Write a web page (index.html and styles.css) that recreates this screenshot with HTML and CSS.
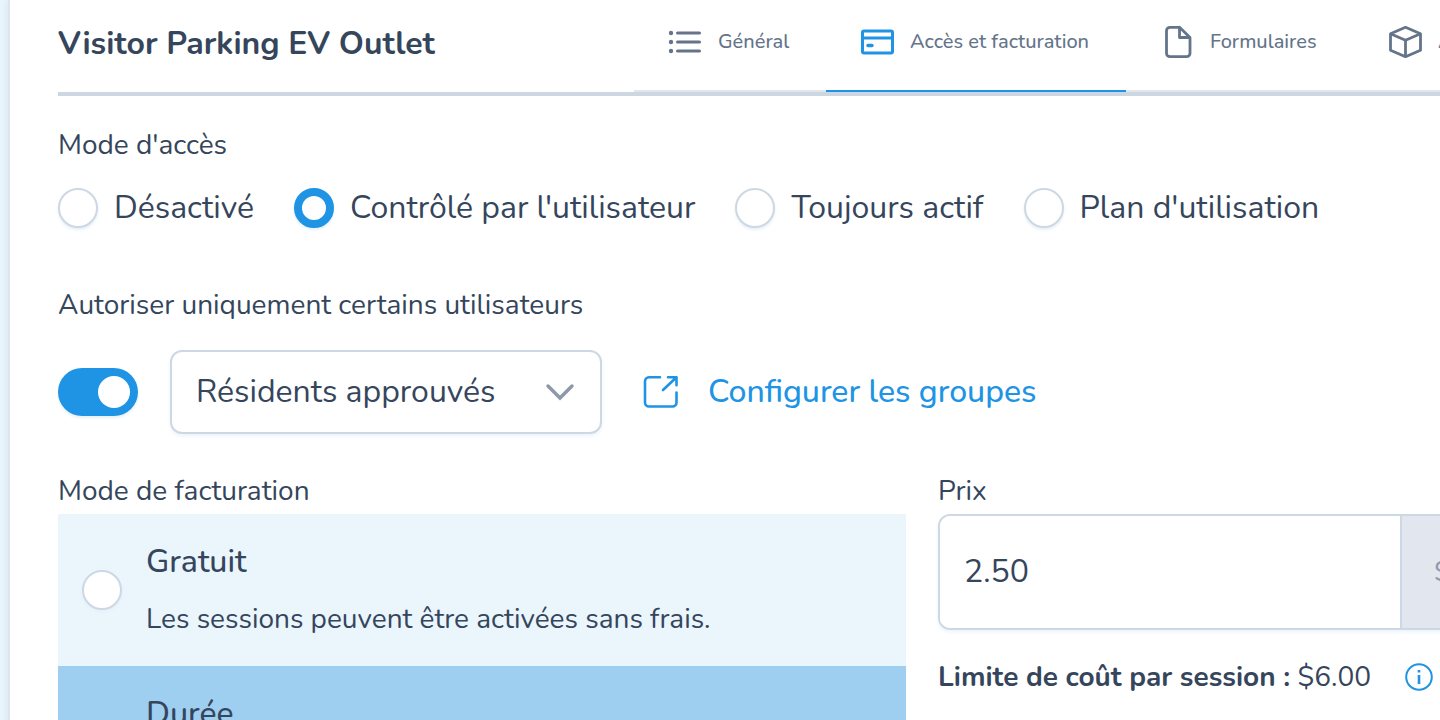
FILE: index.html
```html
<!DOCTYPE html>
<html lang="fr">
<head>
<meta charset="utf-8">
<title>Visitor Parking EV Outlet</title>
<link rel="stylesheet" href="styles.css">
</head>
<body>
<main class="card">
  <div class="content">
    <header class="header">
      <h1 class="title">Visitor Parking EV Outlet</h1>
      <nav class="tabs">
        <button class="tab tab-general" type="button">
          <svg class="tab-icon" viewBox="0 0 32 32" aria-hidden="true"><g stroke-linecap="round" stroke-width="3"><path d="M7.500 7h22M7.500 16h22M7.500 25h22"/></g><g class="dots"><circle cx="1" cy="7" r="2.200"/><circle cx="1" cy="16" r="2.200"/><circle cx="1" cy="25" r="2.200"/></g></svg>
          <span>Général</span>
        </button>
        <button class="tab tab-access is-active" type="button">
          <svg class="tab-icon" viewBox="0 0 32 32" aria-hidden="true"><g stroke-width="3" stroke-linejoin="round" stroke-linecap="round"><rect x="0.500" y="5" width="30" height="22" rx="1.500"/><path d="M1 12h29"/><path stroke-width="3.400" d="M6 19.500h4"/></g></svg>
          <span>Accès et facturation</span>
        </button>
        <button class="tab tab-forms" type="button">
          <svg class="tab-icon" viewBox="0 0 32 32" aria-hidden="true"><g stroke-width="2.800" stroke-linejoin="round"><path d="M17 1.300H8a3.500 3.500 0 0 0-3.500 3.500v22.400a3.500 3.500 0 0 0 3.500 3.500h16.500a3.500 3.500 0 0 0 3.500-3.500V11.500L17.500 1.300v10.200H28"/></g></svg>
          <span>Formulaires</span>
        </button>
        <button class="tab tab-more" type="button">
          <svg class="tab-icon" viewBox="0 0 32 32" aria-hidden="true"><g stroke-width="2.800" stroke-linejoin="round"><path d="M15.500 1.300l15 6.500v16.400l-15 6.500-15-6.500V7.800zM.5 7.800l15 6.400 15-6.400M15.500 14.200v16.300"/></g></svg>
          <span>A</span>
        </button>
      </nav>
    </header>

    <fieldset class="group access">
      <legend class="label">Mode d'accès</legend>
      <div class="radios">
        <label class="option"><input class="radio" type="radio" name="access"><span>Désactivé</span></label>
        <label class="option"><input class="radio" type="radio" name="access" checked><span>Contrôlé par l'utilisateur</span></label>
        <label class="option"><input class="radio" type="radio" name="access"><span>Toujours actif</span></label>
        <label class="option"><input class="radio" type="radio" name="access"><span>Plan d'utilisation</span></label>
      </div>
    </fieldset>

    <section class="restrict">
      <label class="label" for="restrict">Autoriser uniquement certains utilisateurs</label>
      <div class="restrict-row">
        <input class="switch" id="restrict" type="checkbox" role="switch" checked>
        <div class="select-box">
          <select class="select" aria-label="Groupe autorisé"><option>Résidents approuvés</option></select>
          <svg class="chevron" viewBox="0 0 28 18" aria-hidden="true"><path d="M2 3l12 12L26 3"/></svg>
        </div>
        <a class="link" href="#groupes">
          <svg class="link-icon" viewBox="0 0 34 34" aria-hidden="true"><path d="M18 2.200H7a4 4 0 0 0-4 4V27.500a4 4 0 0 0 4 4h23.500a4 4 0 0 0 4-4V17.500M26 2.200h8.500v8M34 2.700L21 15"/></svg>
          <span>Configurer les groupes</span>
        </a>
      </div>
    </section>

    <div class="columns">
      <fieldset class="group">
        <legend class="label">Mode de facturation</legend>
        <label class="plan">
          <input class="radio" type="radio" name="billing">
          <span class="plan-text"><span class="plan-name">Gratuit</span><span class="plan-info">Les sessions peuvent être activées sans frais.</span></span>
        </label>
        <label class="plan is-selected">
          <input class="radio" type="radio" name="billing" checked>
          <span class="plan-text"><span class="plan-name">Durée</span><span class="plan-info">&nbsp;</span></span>
        </label>
      </fieldset>
      <section>
        <label class="label" for="price">Prix</label>
        <div class="price">
          <input class="price-input" id="price" type="text" value="2.50">
          <span class="price-unit">$</span>
        </div>
        <p class="limit">
          <span><strong>Limite de coût par session :</strong> $6.00</span>
          <button class="info" type="button" aria-label="Information">
            <svg viewBox="0 0 28 28" aria-hidden="true"><circle cx="14" cy="14" r="12.800"/><path d="M14 12v9M14 7v2.400" stroke-width="2.600"/></svg>
          </button>
        </p>
      </section>
    </div>
  </div>
</main>
</body>
</html>
```
FILE: styles.css
```css
* { box-sizing: border-box; }

body {
  margin: 0;
  height: 100vh;
  overflow: hidden;
  padding-left: 8px;
  background: #eaf5fc;
  color: #35465c;
  font: 400 32px/40px Nunito, Lato, sans-serif;
}

button, input, select { font: inherit; color: inherit; margin: 0; }
svg { fill: none; stroke: currentColor; overflow: visible; display: block; }

.card {
  min-height: 100vh;
  padding-left: 48px;
  border-left: 2px solid #dce5ed;
  background: #fff;
  box-shadow: -2px 0 6px #dbe9f3;
}
.content { width: 120vw; }

.header {
  display: grid;
  grid-template-columns: 1fr 2fr;
  height: 96px;
  border-bottom: 4px solid #cdd7e2;
}
.title { margin: 0; padding-top: 24px; font-size: 32px; line-height: 40px; font-weight: 700; white-space: nowrap; }
.tabs { display: flex; }
.tab {
  display: flex;
  align-items: center;
  gap: 16px;
  padding: 0 0 6px 36px;
  border: 0;
  border-bottom: 2px solid #dfe6ee;
  background: none;
  color: #64748a;
  font-size: 20px;
  line-height: 24px;
  font-weight: 500;
  white-space: nowrap;
}
.tab-general { flex: 0 0 192px; }
.tab-access { flex: 0 0 300px; }
.tab-forms { flex: 0 0 228px; }
.tab-more { flex: 1; }
.tab.is-active { border-color: #2094e4; }
.tab.is-active .tab-icon { color: #2094e4; }
.tab-icon { width: 32px; height: 32px; flex: none; }
.dots { fill: currentColor; stroke: none; }

.group { margin: 0; padding: 0; border: 0; min-width: 0; }
.label { display: block; padding: 0; font-size: 28px; line-height: 40px; }

.access { margin-top: 29px; }
.radios { display: flex; gap: 40px; padding-top: 23px; }
.option { display: flex; align-items: center; gap: 16px; white-space: nowrap; }
.radio {
  appearance: none;
  flex: none;
  width: 40px;
  height: 40px;
  border: 2px solid #cdd8e4;
  border-radius: 50%;
  background: #fff;
  box-shadow: 0 2px 3px #e6f0f7;
}
.radio:checked { border: 8px solid #2094e4; }

.restrict { padding-top: 57px; }
.restrict-row { display: flex; align-items: center; padding-top: 25px; }
.switch {
  appearance: none;
  width: 80px;
  height: 48px;
  margin-right: 32px;
  padding: 8px;
  border-radius: 24px;
  background: #2094e4;
  box-shadow: 0 2px 3px #e6f0f7;
  display: flex;
  justify-content: flex-end;
}
.switch::before { content: ""; width: 32px; height: 32px; border-radius: 50%; background: #fff; }
.select-box { display: grid; align-items: center; width: 432px; margin-right: 40px; }
.select {
  grid-area: 1 / 1;
  appearance: none;
  width: 100%;
  height: 84px;
  padding: 0 64px 0 24px;
  border: 2px solid #cdd8e4;
  border-radius: 12px;
  background: #fff;
  box-shadow: 0 2px 4px #ebf4fa;
}
.chevron { grid-area: 1 / 1; justify-self: end; margin-right: 28px; width: 28px; height: 18px; stroke: #8d99ab; stroke-width: 3.5; stroke-linecap: round; pointer-events: none; }
.link { display: flex; align-items: center; gap: 32px; color: #2094e4; font-weight: 500; text-decoration: none; white-space: nowrap; }
.link-icon { width: 34px; height: 34px; stroke-width: 2.6; stroke-linecap: round; stroke-linejoin: round; }

.columns { display: grid; grid-template-columns: 1fr 1fr; gap: 32px; padding-top: 37px; }
.columns .label { padding-bottom: 3px; }
.plan { display: flex; align-items: center; gap: 24px; height: 152px; padding: 0 24px; background: #eaf5fc; }
.plan.is-selected { background: #9fcff0; }
.plan-text { display: grid; gap: 17px; }
.plan-name { font-weight: 500; }
.plan-info { font-size: 28px; }

.price {
  display: flex;
  height: 116px;
  border: 2px solid #cdd8e4;
  border-radius: 12px;
  overflow: hidden;
  box-shadow: 0 2px 4px #ebf4fa;
}
.price-input { flex: 0 0 462px; min-width: 0; padding: 0 24px; border: 0; border-right: 2px solid #cdd8e4; background: #fff; }
.price-unit { flex: 1; display: flex; align-items: center; padding-left: 32px; background: #e2e7ef; color: #909aaa; font-size: 28px; }
.limit { display: flex; align-items: center; gap: 34px; margin: 0; padding-top: 27px; font-size: 28px; }
.limit strong { font-weight: 700; }
.info { width: 28px; height: 28px; padding: 0; border: 0; background: none; color: #2094e4; stroke-width: 2; }
```
